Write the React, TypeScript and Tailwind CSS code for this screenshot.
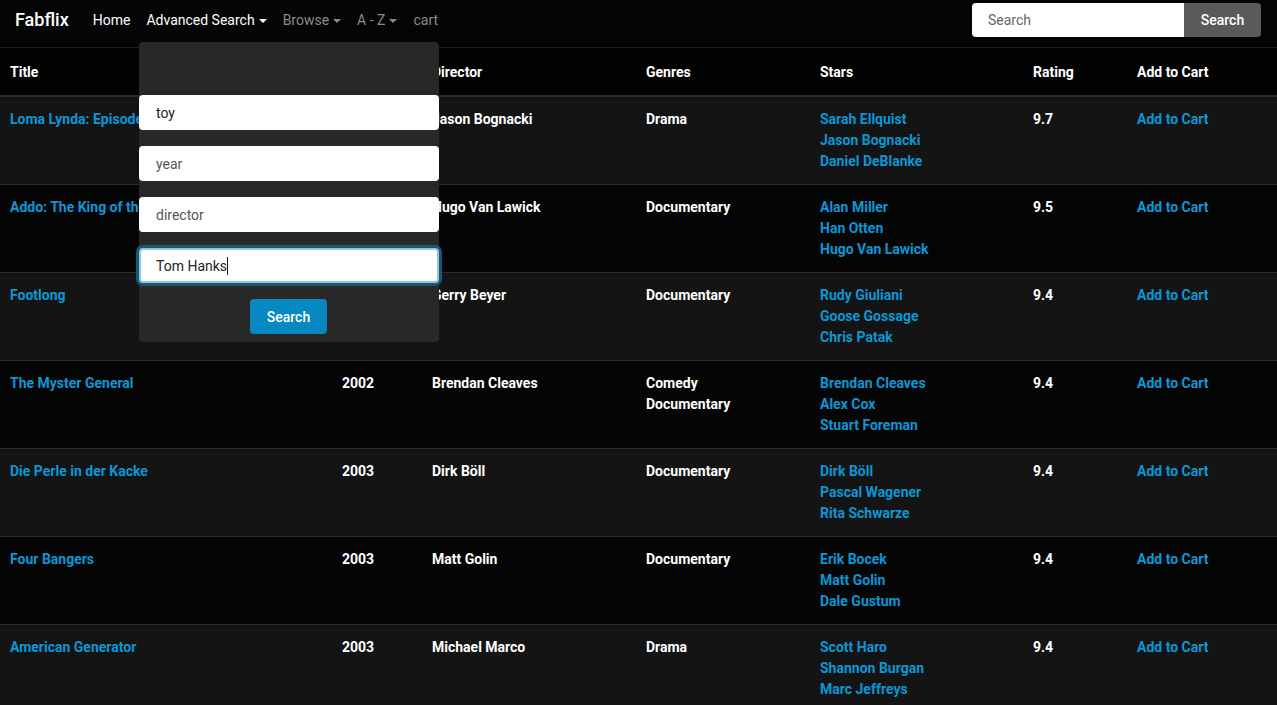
import React from "react";

type Movie = {
  title: string;
  year: string;
  director: string;
  genres: string[];
  stars: string[];
  rating: string;
};

const movies: Movie[] = [
  { title: "Loma Lynda: Episode II", year: "2001", director: "Jason Bognacki", genres: ["Drama"], stars: ["Sarah Ellquist", "Jason Bognacki", "Daniel DeBlanke"], rating: "9.7" },
  { title: "Addo: The King of the Elephants", year: "2001", director: "Hugo Van Lawick", genres: ["Documentary"], stars: ["Alan Miller", "Han Otten", "Hugo Van Lawick"], rating: "9.5" },
  { title: "Footlong", year: "2002", director: "Gerry Beyer", genres: ["Documentary"], stars: ["Rudy Giuliani", "Goose Gossage", "Chris Patak"], rating: "9.4" },
  { title: "The Myster General", year: "2002", director: "Brendan Cleaves", genres: ["Comedy", "Documentary"], stars: ["Brendan Cleaves", "Alex Cox", "Stuart Foreman"], rating: "9.4" },
  { title: "Die Perle in der Kacke", year: "2003", director: "Dirk Böll", genres: ["Documentary"], stars: ["Dirk Böll", "Pascal Wagener", "Rita Schwarze"], rating: "9.4" },
  { title: "Four Bangers", year: "2003", director: "Matt Golin", genres: ["Documentary"], stars: ["Erik Bocek", "Matt Golin", "Dale Gustum"], rating: "9.4" },
  { title: "American Generator", year: "2003", director: "Michael Marco", genres: ["Drama"], stars: ["Scott Haro", "Shannon Burgan", "Marc Jeffreys"], rating: "9.4" },
];

const Caret: React.FC = () => (
  <span className="inline-block ml-1 align-middle border-x-[4px] border-t-[4px] border-x-transparent border-t-current" />
);

const Navbar: React.FC = () => {
  return (
    <nav className="h-12 bg-[#050505] flex items-center pl-[15px] pr-4 pb-2 border-b border-[#1c1c1c]">
      <span className="text-white text-[18px] font-medium mr-4">Fabflix</span>
      <div className="flex items-center text-sm">
        <span className="px-2 text-white">Home</span>
        <span className="px-2 text-white">
          Advanced Search
          <Caret />
        </span>
        <span className="px-2 text-[#8a8a8a]">
          Browse
          <Caret />
        </span>
        <span className="px-2 text-[#8a8a8a]">
          A - Z
          <Caret />
        </span>
        <span className="px-2 text-[#8a8a8a]">cart</span>
      </div>
      <div className="ml-auto flex items-center">
        <input
          placeholder="Search"
          className="w-[212px] h-[34px] bg-white rounded-l px-4 text-sm text-[#333] placeholder:text-[#666] outline-none"
        />
        <button className="w-[77px] h-[34px] bg-[#5a5a5a] text-white text-sm font-medium rounded-r">
          Search
        </button>
      </div>
    </nav>
  );
};

const AdvancedSearchMenu: React.FC = () => {
  return (
    <div className="absolute left-[139px] top-[42px] w-[300px] h-[300px] bg-[#282828] rounded pt-[53px] flex flex-col gap-4 z-10">
      <input
        defaultValue="toy"
        className="h-[35px] w-full bg-white rounded px-[17px] text-sm text-[#222] outline-none"
      />
      <input
        placeholder="year"
        className="h-[35px] w-full bg-white rounded px-[17px] text-sm placeholder:text-[#555] outline-none"
      />
      <input
        placeholder="director"
        className="h-[35px] w-full bg-white rounded px-[17px] text-sm placeholder:text-[#555] outline-none"
      />
      <div className="h-[35px] w-full bg-white rounded border-2 border-[#8cc9e6] ring-[3px] ring-[#1d566f] px-[15px] flex items-center text-sm text-[#222]">
        Tom Hanks
        <span className="inline-block w-px h-[18px] bg-[#222]" />
      </div>
      <div className="flex justify-center -ml-px">
        <button className="w-[77px] h-[35px] bg-[#0888c0] text-white text-sm font-medium rounded">
          Search
        </button>
      </div>
    </div>
  );
};

const cols = [
  "w-[332px]",
  "w-[90px]",
  "w-[214px]",
  "w-[174px]",
  "w-[213px]",
  "w-[104px]",
  "w-[150px]",
];

export default function App() {
  return (
    <div className="relative min-h-screen bg-[#050505] font-['Roboto',sans-serif]">
      <Navbar />
      <AdvancedSearchMenu />
      <table className="w-full table-fixed border-collapse text-sm font-bold leading-[21px]">
        <thead>
          <tr className="h-12 bg-[#020202] text-white text-left border-b-2 border-[#2a2a2a]">
            {["Title", "Year", "Director", "Genres", "Stars", "Rating", "Add to Cart"].map((h, i) => (
              <th key={h} className={`${cols[i]} pl-[10px] pt-0.5 align-middle font-bold`}>
                {h}
              </th>
            ))}
          </tr>
        </thead>
        <tbody>
          {movies.map((m, i) => (
            <tr
              key={m.title}
              className={`${i % 2 === 0 ? "bg-[#141414]" : "bg-[#050505]"} border-b border-[#2c2c2c] align-top`}
            >
              <td className="pl-[10px] py-3 text-[#0b97d5] whitespace-nowrap overflow-hidden">{m.title}</td>
              <td className="pl-[10px] py-3 text-white">{m.year}</td>
              <td className="pl-[10px] py-3 text-white">{m.director}</td>
              <td className="pl-[10px] py-3 text-white">
                {m.genres.map((g) => (
                  <div key={g}>{g}</div>
                ))}
              </td>
              <td className="pl-[10px] py-3 text-[#0b97d5]">
                {m.stars.map((s) => (
                  <div key={s}>{s}</div>
                ))}
              </td>
              <td className="pl-[10px] py-3 text-white">{m.rating}</td>
              <td className="pl-[10px] py-3 text-[#0b97d5]">Add to Cart</td>
            </tr>
          ))}
        </tbody>
      </table>
    </div>
  );
}
